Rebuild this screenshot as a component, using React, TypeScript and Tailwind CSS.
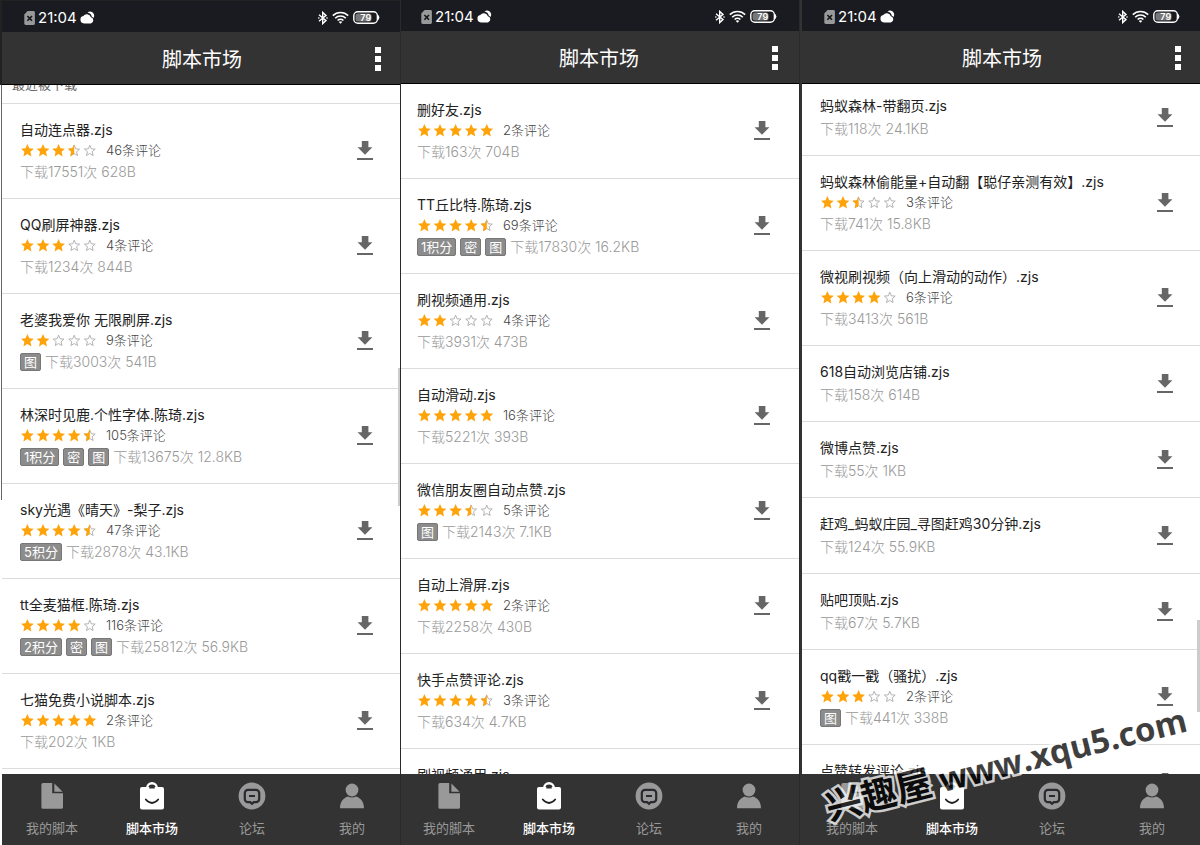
import { useId } from 'react';
import clsx from 'clsx';

interface Script {
  name: string;
  rating?: number;
  comments?: number;
  tags?: string[];
  meta?: string;
  compact?: boolean;
}

const recentScripts: Script[] = [
  { name: '自动连点器.zjs', rating: 3.5, comments: 46, meta: '下载17551次 628B' },
  { name: 'QQ刷屏神器.zjs', rating: 3, comments: 4, meta: '下载1234次 844B' },
  { name: '老婆我爱你 无限刷屏.zjs', rating: 2, comments: 9, tags: ['图'], meta: '下载3003次 541B' },
  { name: '林深时见鹿.个性字体.陈琦.zjs', rating: 4.5, comments: 105, tags: ['1积分', '密', '图'], meta: '下载13675次 12.8KB' },
  { name: 'sky光遇《晴天》-梨子.zjs', rating: 4.5, comments: 47, tags: ['5积分'], meta: '下载2878次 43.1KB' },
  { name: 'tt全麦猫框.陈琦.zjs', rating: 4, comments: 116, tags: ['2积分', '密', '图'], meta: '下载25812次 56.9KB' },
  { name: '七猫免费小说脚本.zjs', rating: 5, comments: 2, meta: '下载202次 1KB' },
];

const popularScripts: Script[] = [
  { name: '删好友.zjs', rating: 5, comments: 2, meta: '下载163次 704B' },
  { name: 'TT丘比特.陈琦.zjs', rating: 4.5, comments: 69, tags: ['1积分', '密', '图'], meta: '下载17830次 16.2KB' },
  { name: '刷视频通用.zjs', rating: 2, comments: 4, meta: '下载3931次 473B' },
  { name: '自动滑动.zjs', rating: 5, comments: 16, meta: '下载5221次 393B' },
  { name: '微信朋友圈自动点赞.zjs', rating: 3.5, comments: 5, tags: ['图'], meta: '下载2143次 7.1KB' },
  { name: '自动上滑屏.zjs', rating: 5, comments: 2, meta: '下载2258次 430B' },
  { name: '快手点赞评论.zjs', rating: 4.5, comments: 3, meta: '下载634次 4.7KB' },
  { name: '刷视频通用.zjs' },
];

const moreScripts: Script[] = [
  { name: '蚂蚁森林-带翻页.zjs', meta: '下载118次 24.1KB', compact: true },
  { name: '蚂蚁森林偷能量+自动翻【聪仔亲测有效】.zjs', rating: 2.5, comments: 3, meta: '下载741次 15.8KB' },
  { name: '微视刷视频（向上滑动的动作）.zjs', rating: 4, comments: 6, meta: '下载3413次 561B' },
  { name: '618自动浏览店铺.zjs', meta: '下载158次 614B', compact: true },
  { name: '微博点赞.zjs', meta: '下载55次 1KB', compact: true },
  { name: '赶鸡_蚂蚁庄园_寻图赶鸡30分钟.zjs', meta: '下载124次 55.9KB', compact: true },
  { name: '贴吧顶贴.zjs', meta: '下载67次 5.7KB', compact: true },
  { name: 'qq戳一戳（骚扰）.zjs', rating: 3, comments: 2, tags: ['图'], meta: '下载441次 338B' },
  { name: '点赞转发评论.zjs', compact: true },
];

const STAR = 'M6.5 0 L8.4 4.2 L12.9 4.7 L9.5 7.8 L10.5 12.4 L6.5 10.1 L2.5 12.4 L3.5 7.8 L0.1 4.7 L4.6 4.2 Z';
const STAR_OUTLINE = 'M6.5 1.2 L8 4.8 L11.9 5.1 L8.9 7.7 L9.8 11.5 L6.5 9.5 L3.2 11.5 L4.1 7.7 L1.1 5.1 L5 4.8 Z';

function Rating({ value }: { value: number }) {
  const id = useId();
  return (
    <svg width="78" height="13" viewBox="0 0 78 13" role="img" aria-label={`${value} / 5`}>
      <clipPath id={id}>
        <rect width="6.5" height="13" />
      </clipPath>
      {[0, 1, 2, 3, 4].map((i) => (
        <g key={i} transform={`translate(${0.9 + i * 15.6} 0)`}>
          {value >= i + 1 ? (
            <path d={STAR} fill="#ffa30a" />
          ) : (
            <>
              <path d={STAR_OUTLINE} fill="none" stroke="#aaa" strokeWidth="0.9" />
              {value > i && <path d={STAR} fill="#ffa30a" clipPath={`url(#${id})`} />}
            </>
          )}
        </g>
      ))}
    </svg>
  );
}

function ScriptRow({ script }: { script: Script }) {
  return (
    <li
      className={clsx(
        'flex justify-between border-b border-[#dcdcdc] pl-[18px] pr-[29px]',
        script.compact ? 'min-h-[76px]' : 'min-h-[95px]'
      )}
    >
      <div className="flex flex-col gap-px pt-4">
        <h2 className="whitespace-nowrap text-[14px] leading-5 text-[#222]">{script.name}</h2>
        {script.rating !== undefined && (
          <div className="flex h-[18px] items-center gap-2">
            <Rating value={script.rating} />
            <span className="text-[13px] font-light leading-[18px] text-[#444]">{script.comments}条评论</span>
          </div>
        )}
        {script.meta && (
          <div className="flex h-6 items-center gap-1 text-[13px]">
            {script.tags?.map((tag) => (
              <span key={tag} className="rounded-xs border border-[#777] bg-[#8c8c8c] px-[3px] leading-4 text-white">
                {tag}
              </span>
            ))}
            <span className="text-[14px] font-light leading-5 text-[#999]">{script.meta}</span>
          </div>
        )}
      </div>
      <button aria-label="下载" className="self-center">
        <svg width="16" height="20" viewBox="0 0 16 20" fill="#666">
          <path d="M4.8 0h6.600v6.300h4L8 13.800.6 6.300h4.200z" />
          <path d="M0 17h16v2H0z" />
        </svg>
      </button>
    </li>
  );
}

function StatusBar() {
  return (
    <div className="flex h-[31px] shrink-0 items-center justify-between bg-[#1a1b21] px-[22px] pt-0.5 text-white">
      <div className="flex items-center gap-0.5">
        <svg width="12" height="14" viewBox="0 0 12 14">
          <path d="M3.600 0H9.500a1.400 1.400 0 0 1 1.400 1.400v11.200A1.400 1.400 0 0 1 9.500 14H1.700A1.400 1.400 0 0 1 .3 12.600V3.400z" fill="#999" />
          <path d="M3.400 5l4.600 4.800M8 5L3.400 9.800" stroke="#15161b" strokeWidth="1.600" />
        </svg>
        <span className="text-[15px] leading-5">21:04</span>
        <svg width="16" height="13" viewBox="0 0 16 13" fill="#fff">
          <path d="M5 12.400a3.700 3.700 0 0 1-.7-7.300A4.300 4.300 0 0 1 11.900 6.200a3.200 3.200 0 0 1 0 6.200z" />
          <path d="M8.500 1.600A4 4 0 0 1 15 3.600a4 4 0 0 1-.5 3.400A4.200 4.200 0 0 0 12.700 5.400 5.200 5.200 0 0 0 8.500 1.600z" />
        </svg>
      </div>
      <div className="flex items-center gap-1">
        <svg width="10" height="14" viewBox="0 0 10 14" fill="none" stroke="#fff" strokeWidth="1.400">
          <path d="M1 3.800L8 9.600L4.700 12.600V1.400L8 4.400L1 10.200" />
          <path d="M.2 7h1.200M8.400 7h1.200" />
        </svg>
        <svg width="17" height="13" viewBox="0 0 17 13" fill="none" stroke="#fff" strokeWidth="1.600">
          <path d="M.8 4.600a11 11 0 0 1 15.400 0" />
          <path d="M3.200 7.200a7.500 7.500 0 0 1 10.600 0" />
          <path d="M5.600 9.500a4.200 4.200 0 0 1 5.800 0" />
          <path d="M8.500 12.800L6.700 11a2.600 2.600 0 0 1 3.600 0z" fill="#fff" stroke="none" />
        </svg>
        <svg width="27" height="13" viewBox="0 0 27 13">
          <rect x="2.500" y="2.500" width="16" height="8" rx="2.500" fill="#777" />
          <rect x=".8" y=".8" width="23.600" height="11.400" rx="4" fill="none" stroke="#fff" strokeWidth="1.400" />
          <path d="M25.200 4.500q1.500 2 0 4z" fill="#fff" stroke="#fff" />
          <text x="12.800" y="9.800" textAnchor="middle" fontSize="9" fontWeight="600" fill="#fff">79</text>
        </svg>
      </div>
    </div>
  );
}

function TitleBar() {
  return (
    <header className="grid h-[53px] shrink-0 grid-cols-[1fr_auto_1fr] items-center border-b border-black bg-[#333] px-[21px] pt-0.5 text-white">
      <h1 className="col-start-2 pt-0.5 text-[20px] leading-7">脚本市场</h1>
      <button aria-label="更多" className="flex flex-col gap-[3px] justify-self-end">
        <span className="size-1.5 bg-white" />
        <span className="size-1.5 bg-white" />
        <span className="size-1.5 bg-white" />
      </button>
    </header>
  );
}

const tabs = [
  {
    label: '我的脚本',
    icon: (
      <>
        <path d="M5 .9h9.200v10.300H25v14a1.600 1.600 0 0 1-1.600 1.600H5a1.600 1.600 0 0 1-1.600-1.600V2.500A1.600 1.600 0 0 1 5 .9z" />
        <path d="M16.400 1.600L24.600 9.700h-8.200z" />
      </>
    ),
  },
  {
    label: '脚本市场',
    active: true,
    icon: (
      <>
        <path d="M9.200 7V5.800a4.800 4.600 0 0 1 9.600 0V7" fill="none" stroke="#fff" strokeWidth="2.400" />
        <rect x="2" y="5" width="24" height="22.500" rx="2" />
        <path d="M11.200 6.400a2.800 2.800 0 0 1 5.600 0z" fill="#333" />
        <path d="M7.800 17.500q6.200 7 12.400 0" fill="none" stroke="#222" strokeWidth="1.800" strokeLinecap="round" />
      </>
    ),
  },
  {
    label: '论坛',
    icon: (
      <>
        <circle cx="14" cy="14" r="13.400" />
        <path d="M10 7.800h8a3.200 3.200 0 0 1 3.200 3.200v6a3.200 3.200 0 0 1-3.200 3.200h-2.200L14 21.800l-1.800-1.600H10A3.200 3.200 0 0 1 6.800 17v-6A3.200 3.200 0 0 1 10 7.800z" fill="#999" stroke="#2a2a2e" strokeWidth="2.200" />
        <path d="M11 14h6" stroke="#2a2a2e" strokeWidth="2" />
      </>
    ),
  },
  {
    label: '我的',
    icon: (
      <>
        <circle cx="14" cy="8" r="6.400" />
        <path d="M2 26.200c0-7 3.800-10.400 8-11.800q4 2 8 0c4.200 1.400 8 4.800 8 11.800z" />
      </>
    ),
  },
];

function TabBar() {
  return (
    <nav className="grid h-[71px] shrink-0 grid-cols-4 bg-[#333]">
      {tabs.map((tab) => (
        <button
          key={tab.label}
          className={clsx(
            'flex flex-col items-center gap-2 pt-2 text-[13px] leading-5',
            tab.active ? 'font-medium text-white' : 'text-[#999]'
          )}
        >
          <svg width="28" height="28" viewBox="0 0 28 28" fill={tab.active ? '#fff' : '#999'}>
            {tab.icon}
          </svg>
          {tab.label}
        </button>
      ))}
    </nav>
  );
}

interface PhoneProps {
  scripts: Script[];
  heading?: string;
  className?: string;
  listClassName?: string;
}

function Phone({ scripts, heading, className, listClassName }: PhoneProps) {
  return (
    <div className={clsx('flex h-full flex-col', className)}>
      <StatusBar />
      <TitleBar />
      <main className="min-h-0 flex-1 overflow-hidden bg-white">
        {heading && (
          <p className="-mt-2.5 border-b border-[#dcdcdc] pb-2.5 pl-2.5 text-[13px] leading-[18px] text-[#666]">{heading}</p>
        )}
        <ul className={listClassName}>
          {scripts.map((script, i) => (
            <ScriptRow key={i} script={script} />
          ))}
        </ul>
      </main>
      <TabBar />
    </div>
  );
}

export default function App() {
  return (
    <div className="grid h-screen grid-cols-3 overflow-hidden bg-white font-['Inter','Noto_Sans_CJK_SC',sans-serif]">
      <section className="relative flex overflow-hidden">
        <div className="flex w-0.5 shrink-0 flex-col">
          <div className="h-[85px] bg-[#222]" />
          <div className="h-[415px] border-r border-[#666]" />
        </div>
        <Phone
          scripts={recentScripts}
          heading="最近被下载"
          className="-mr-0.5 flex-1 border-t border-[#222]"
        />
        <div className="absolute right-0 top-[368px] h-[138px] w-0.5 bg-[#ccc]" />
      </section>

      <section className="overflow-hidden border-x border-[#2a2a2a]">
        <Phone scripts={popularScripts} className="-ml-0.5" />
      </section>

      <section className="relative overflow-hidden border-l-2 border-[#333]">
        <Phone scripts={moreScripts} className="-mr-0.5" listClassName="-mt-1" />
        <div className="absolute right-0 top-[620px] h-[92px] w-[3px] bg-[#ccc]" />
        {/* Site watermark */}
        <div className="pointer-events-none absolute bottom-[82px] left-[204px] -translate-x-1/2 translate-y-1/2 -rotate-14 whitespace-nowrap font-['Open_Sans','Noto_Sans_CJK_SC',sans-serif] text-[33px] font-bold leading-none text-black opacity-75 [-webkit-text-stroke:5px_white] [paint-order:stroke_fill] [stroke-linejoin:round]">
          <span className="text-[36px]">兴趣屋</span> www.xqu5.com
        </div>
      </section>
    </div>
  );
}
